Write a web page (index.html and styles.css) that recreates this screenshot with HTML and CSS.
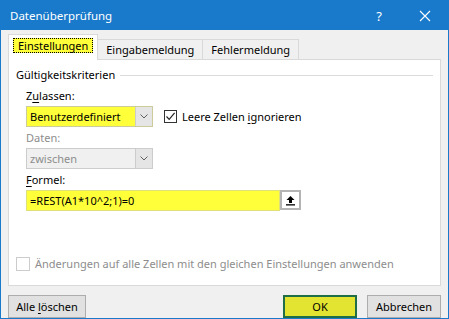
FILE: index.html
```html
<!DOCTYPE html>
<html lang="de">
<head>
    <meta charset="UTF-8">
    <title>Datenüberprüfung</title>
    <link rel="stylesheet" href="styles.css">
</head>
<body>
    <div class="window">
        <div class="titlebar">
            <span class="title">Datenüberprüfung</span>
            <span class="help">?</span>
            <span class="close">
                <svg width="12" height="12" viewBox="0 0 12 12"><path d="M1 1 L11 11 M11 1 L1 11" stroke="#fff" stroke-width="1.1" fill="none"/></svg>
            </span>
        </div>

        <div class="content">
            <div class="tabs">
                <div class="tab active"><span class="focus">Einstellungen</span></div>
                <div class="tab">Eingabemeldung</div>
                <div class="tab">Fehlermeldung</div>
            </div>

            <div class="panel">
                <div class="group-title">
                    <span>Gültigkeitskriterien</span>
                    <span class="rule"></span>
                </div>

                <div class="fields">
                    <div class="label">Z<u>u</u>lassen:</div>
                    <div class="row">
                        <div class="select highlight">
                            <span class="value">Benutzerdefiniert</span>
                            <span class="arrow"><svg width="8" height="5" viewBox="0 0 8 5"><path d="M0.5 0.5 L4 4 L7.5 0.5" stroke="#606060" fill="none"/></svg></span>
                        </div>
                        <div class="check">
                            <span class="box"><svg width="11" height="11" viewBox="0 0 11 11"><path d="M1.5 5.5 L4.2 8.3 L9.6 1.8" stroke="#222" stroke-width="1.2" fill="none"/></svg></span>
                            <span>Leere Zellen <u>i</u>gnorieren</span>
                        </div>
                    </div>

                    <div class="label disabled">Daten:</div>
                    <div class="select off">
                        <span class="value">zwischen</span>
                        <span class="arrow"><svg width="8" height="5" viewBox="0 0 8 5"><path d="M0.5 0.5 L4 4 L7.5 0.5" stroke="#606060" fill="none"/></svg></span>
                    </div>

                    <div class="label"><u>F</u>ormel:</div>
                    <div class="formula-row">
                        <div class="formula">=REST(A1*10^2;1)=0</div>
                        <div class="ref-btn">
                            <svg width="11" height="11" viewBox="0 0 11 11"><path d="M5.5 1 L1.5 5 L4 5 L4 8 L7 8 L7 5 L9.5 5 Z" fill="#000"/><rect x="1" y="9.2" width="9" height="1.3" fill="#000"/></svg>
                        </div>
                    </div>
                </div>

                <div class="apply">
                    <span class="box off"></span>
                    <span>Änderungen auf alle Zellen mit den gleichen Einstellungen anwenden</span>
                </div>
            </div>

            <div class="buttons">
                <button class="btn">Alle <u>l</u>öschen</button>
                <span class="spacer"></span>
                <button class="btn ok">OK</button>
                <button class="btn">Abbrechen</button>
            </div>
        </div>
    </div>
</body>
</html>
```

FILE: styles.css
```css
/* Excel data validation dialog */
body {
    margin: 0;
    font-family: "Noto Sans", "DejaVu Sans", sans-serif;
    font-size: 11px;
    color: #000;
}
u {
    text-decoration-thickness: 1px;
    text-underline-offset: 2px;
}
.window {
    width: 447px;
    height: 317px;
    border: 1px solid #1979ca;
    background-color: #f0f0f0;
    display: flex;
    flex-direction: column;
}
.titlebar {
    height: 30px;
    background-color: #1979ca;
    color: #fff;
    display: flex;
    align-items: center;
    padding-left: 9px;
    font-size: 11.5px;
}
.title {
    flex: 1;
}
.help {
    width: 46px;
    text-align: center;
    font-size: 13px;
}
.close {
    width: 46px;
    display: flex;
    justify-content: center;
}
.content {
    flex: 1;
    display: flex;
    flex-direction: column;
    padding: 7px 7px 0 7px;
}
.tabs {
    display: flex;
    align-items: flex-end;
    height: 22px;
    padding-left: 1px;
}
.tab {
    height: 19px;
    line-height: 19px;
    padding: 0 8px;
    border: 1px solid #d9d9d9;
    border-bottom: none;
    margin-left: -1px;
    background-color: #f0f0f0;
}
.tab.active {
    height: 22px;
    background-color: #fff;
    position: relative;
    z-index: 1;
    margin-bottom: -1px;
    padding: 3px 4px 0 4px;
    line-height: 15px;
}
.focus {
    display: inline-block;
    background-color: #ffff3a;
    outline: 1px dotted #000;
    outline-offset: -1px;
    padding: 0 5px;
    height: 15px;
}
.panel {
    height: 218px;
    border: 1px solid #d9d9d9;
    background-color: #fff;
    display: flex;
    flex-direction: column;
    padding: 7px 7px 0 7px;
}
.group-title {
    display: flex;
    align-items: center;
    line-height: 16px;
}
.rule {
    flex: 1;
    height: 1px;
    background-color: #dcdcdc;
    margin: 0 0 0 5px;
}
.fields {
    padding-left: 10px;
    margin-top: 5px;
}
.label {
    line-height: 16px;
    margin-bottom: 2px;
}
.disabled {
    color: #8d8d8d;
}
.row {
    display: flex;
    align-items: center;
    margin-bottom: 3px;
}
.select {
    width: 125px;
    height: 19px;
    border: 1px solid #7a7a7a;
    display: flex;
}
.select .value {
    flex: 1;
    line-height: 19px;
    padding-left: 3px;
}
.select .arrow {
    width: 16px;
    border-left: 1px solid #cccccc;
    background-color: #e5e5e5;
    display: flex;
    align-items: center;
    justify-content: center;
}
.highlight {
    border-color: #cccc9a;
}
.highlight .value {
    background-color: #ffff3a;
}
.select.off {
    border-color: #cccccc;
    background-color: #f0f0f0;
    color: #8d8d8d;
    margin-bottom: 3px;
}
.check {
    display: flex;
    align-items: center;
    margin-left: 11px;
}
.box {
    width: 11px;
    height: 11px;
    border: 1px solid #333;
    background-color: #fff;
    display: inline-flex;
    margin-right: 5px;
}
.box.off {
    border-color: #cccccc;
}
.formula-row {
    display: flex;
}
.formula {
    width: 249px;
    height: 19px;
    line-height: 19px;
    padding-left: 3px;
    background-color: #ffff3a;
    border: 1px solid #e0e07a;
}
.ref-btn {
    width: 17px;
    height: 16px;
    border: 2px solid #b4b4b4;
    background-color: #fff;
    display: flex;
    align-items: center;
    justify-content: center;
}
.apply {
    margin-top: auto;
    margin-bottom: 14px;
    display: flex;
    align-items: center;
    color: #8d8d8d;
}
.apply .box {
    width: 12px;
    height: 12px;
    margin-right: 5px;
}
.buttons {
    display: flex;
    margin-top: 9px;
}
.spacer {
    flex: 1;
}
.btn {
    font-family: inherit;
    font-size: 11px;
    height: 23px;
    width: 74px;
    padding: 0;
    margin-left: 10px;
    background-color: #e1e1e1;
    border: 1px solid #adadad;
    color: #000;
}
.btn:first-child {
    margin-left: 0;
    width: 78px;
}
.btn.ok {
    border: 2px solid #1f6e47;
    background-color: #e3e332;
}
```
